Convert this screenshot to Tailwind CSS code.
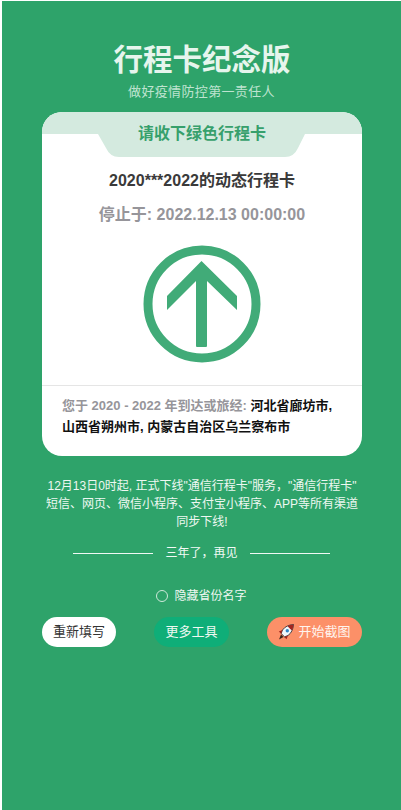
<!DOCTYPE html>
<html lang="zh-CN">
<head>
    <meta charset="UTF-8">
    <meta name="viewport" content="width=device-width, initial-scale=1.0">
    <title>行程卡纪念版</title>
    <script src="https://cdn.jsdelivr.net/npm/@tailwindcss/browser@4"></script>
</head>
<body class="bg-white">
    <div class="ml-[2px] mt-px h-[809px] bg-[#2ea36a] font-['Liberation_Sans','Noto_Sans_CJK_SC',sans-serif] overflow-hidden">
        <!-- Header -->
        <header class="pt-[42px] text-center">
            <h1 class="ml-px text-[29.5px] leading-[34px] font-bold text-[#e6f5ed]">行程卡纪念版</h1>
            <p class="mt-[6px] text-[13px] leading-[18px] tracking-[0.35px] text-[#bfe3d0]">做好疫情防控第一责任人</p>
        </header>

        <!-- Card -->
        <main class="mx-[40px] mt-[11px] w-[320px] h-[344px] bg-white rounded-[20px] overflow-hidden flex flex-col">
            <div class="relative h-[45px] shrink-0">
                <svg class="absolute left-0 top-0" width="320" height="45" viewBox="0 0 320 45">
                    <path d="M0 0H320V22H263L256 36Q252 45 243 45H77Q68 45 64 36L56 22H0Z" fill="#d4eadf"></path>
                </svg>
                <div class="relative pt-[10px] text-center text-[16px] leading-[24px] font-bold text-[#37a06c]">请收下绿色行程卡</div>
            </div>
            <div class="mt-[12px] text-center text-[16px] leading-[24px] font-bold text-[#3a3a3a]">2020***2022的动态行程卡</div>
            <div class="mt-[10px] text-center text-[16px] leading-[24px] font-bold text-[#96959a]">停止于: 2022.12.13 00:00:00</div>
            <div class="mt-[18px] flex justify-center">
                <svg width="118" height="118" viewBox="0 0 118 118">
                    <circle cx="59" cy="59" r="54" fill="none" stroke="#41ab78" stroke-width="9"></circle>
                    <path d="M58.500 16L24 51V65L53 36V101Q53 102 54 102H63Q64 102 64 101V36L94 65V51Z" fill="#41ab78"></path>
                </svg>
            </div>
            <div class="mt-[22px] border-t border-[#e5e5e5] pt-[9px] px-[20px] text-[13px] leading-[21px] font-bold text-[#96959a]">
                您于 2020 - 2022 年到达或旅经: <span class="text-[#111111]">河北省廊坊市, 山西省朔州市, 内蒙古自治区乌兰察布市</span>
            </div>
        </main>

        <!-- Notice -->
        <p class="mx-[40px] mt-[21px] w-[320px] text-center text-[12px] leading-[18px] text-[#eef8f2]">12月13日0时起, 正式下线"通信行程卡"服务，"通信行程卡" 短信、网页、微信小程序、支付宝小程序、APP等所有渠道同步下线!</p>

        <div class="mt-[12px] flex items-center justify-center gap-[12px]">
            <span class="w-[80px] h-px bg-[#f0f8f4]"></span>
            <span class="text-[12px] leading-[20px] text-[#f2faf6]">三年了，再见</span>
            <span class="w-[80px] h-px bg-[#f0f8f4]"></span>
        </div>

        <label class="mt-[24px] flex items-center justify-center gap-[6px] text-[12px] leading-[18px] text-[#eef8f2]">
            <span class="w-[12px] h-[12px] rounded-full border border-[#cfe9db]"></span>
            隐藏省份名字
        </label>

        <!-- Buttons -->
        <div class="mt-[12px] mx-[40px] w-[320px] flex items-center justify-between">
            <button class="w-[74px] h-[30px] rounded-full bg-white text-[13px] text-[#333333]">重新填写</button>
            <button class="w-[75px] h-[30px] rounded-full bg-[#0fae78] text-[13px] text-[#eef8f2]">更多工具</button>
            <button class="w-[95px] h-[30px] rounded-full bg-[#fc9068] text-[13px] text-[#fff4ee] flex items-center justify-center gap-[4px]">
                <svg width="16" height="16" viewBox="0 0 16 16">
                    <path d="M1 15.500L3 10.500L5.500 13Z" fill="#3a2418"></path>
                    <path d="M15.500 .5C11 .8 7 2.500 4.500 6L3.200 9.500L6.500 12.800L10 11.500C13.500 9 15.200 5 15.500 .5Z" fill="#f2f8fb" stroke="#1d2a36" stroke-width="0.8"></path>
                    <path d="M15.500 .5C13 .7 11 1.300 9.500 2.200L13.800 6.500C14.800 5 15.300 3 15.500 .5Z" fill="#a3261f"></path>
                    <circle cx="9.300" cy="6.700" r="1.700" fill="#2f86c8"></circle>
                    <path d="M4.500 6L.8 7.500L3.200 9.800ZM10 11.500L8.500 15.300L6.200 13Z" fill="#a3261f"></path>
                </svg>
                <span>开始截图</span>
            </button>
        </div>
    </div>
</body>
</html>
